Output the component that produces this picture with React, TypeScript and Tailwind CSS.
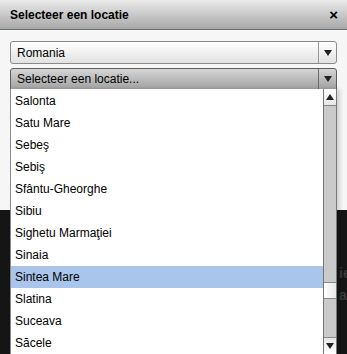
import React from 'react';

const places = [
    'Salonta',
    'Satu Mare',
    'Sebeş',
    'Sebiş',
    'Sfântu-Gheorghe',
    'Sibiu',
    'Sighetu Marmaţiei',
    'Sinaia',
    'Sintea Mare',
    'Slatina',
    'Suceava',
    'Săcele',
];

function Arrow({ up = false }: { up?: boolean }) {
    return (
        <svg width="8" height="6" viewBox="0 0 8 6" className={up ? 'rotate-180' : ''}>
            <path d="M0 0 H8 L4 6 Z" fill="#222" />
        </svg>
    );
}

export default function App() {
    return (
        <div
            className="relative w-[347px] h-[354px] overflow-hidden bg-[#151515] text-black"
            style={{ fontFamily: '"Liberation Sans", Arial, sans-serif' }}>
            {/* Dialog */}
            <div className="h-[210px] flex flex-col bg-[#f6f6f6]">
                {/* Title bar */}
                <div className="h-[30px] flex items-center justify-between pl-[10px] pr-[9px] bg-gradient-to-b from-[#ebebeb] to-[#a8a8a8] border-b border-[#6f6f6f]">
                    <span className="text-[12px] font-bold">Selecteer een locatie</span>
                    <span className="text-[15px] font-bold leading-none">×</span>
                </div>

                <div className="px-[10px] pt-[11px] flex flex-col gap-[4px]">
                    {/* Country select */}
                    <div className="h-[23px] flex items-stretch rounded-[3px] border border-[#8a8a8a] bg-gradient-to-b from-white to-[#e2e2e2]">
                        <span className="flex-1 flex items-center pl-[6px] text-[12px]">Romania</span>
                        <span className="w-[18px] flex items-center justify-center border-l border-[#9a9a9a]">
                            <Arrow />
                        </span>
                    </div>
                    {/* Location select */}
                    <div className="h-[22px] flex items-stretch rounded-t-[3px] border border-[#5e5e5e] bg-gradient-to-b from-[#d6d6d6] to-[#a2a2a2]">
                        <span className="flex-1 flex items-center pl-[6px] text-[12px]">Selecteer een locatie...</span>
                        <span className="w-[18px] flex items-center justify-center border-l border-[#6a6a6a]">
                            <Arrow />
                        </span>
                    </div>
                </div>
            </div>

            {/* faint page text behind */}
            <div className="absolute left-[339px] top-[262px] text-[14px] leading-[22px] text-[#3a3a3a] font-bold">
                <div>ie</div>
                <div>ar</div>
            </div>

            {/* Dropdown list */}
            <div className="absolute left-[10px] top-[89px] w-[327px] h-[280px] flex bg-white border-l border-[#8a8a8a] shadow-[3px_0_4px_rgba(0,0,0,0.15)]">
                <ul className="flex-1 pt-[1px]">
                    {places.map(name => (
                        <li
                            key={name}
                            className={`h-[22px] flex items-center pl-[4px] text-[12px] ${name === 'Sintea Mare' ? 'bg-[#a9c5eb]' : ''}`}>
                            {name}
                        </li>
                    ))}
                </ul>
                {/* Scrollbar */}
                <div className="w-[14px] h-[265px] flex flex-col bg-[#cacaca] border-x border-[#777]">
                    <div className="h-[17px] flex items-center justify-center bg-gradient-to-b from-white to-[#e6e6e6] border-b border-[#888]">
                        <Arrow up />
                    </div>
                    <div className="flex-1 flex flex-col">
                        <div className="h-[176px]" />
                        <div className="h-[17px] bg-gradient-to-r from-white to-[#e8e8e8] border-y border-[#888]" />
                    </div>
                    <div className="h-[17px] flex items-center justify-center bg-gradient-to-b from-[#e6e6e6] to-white border-t border-[#888]">
                        <Arrow />
                    </div>
                </div>
            </div>
        </div>
    );
}
